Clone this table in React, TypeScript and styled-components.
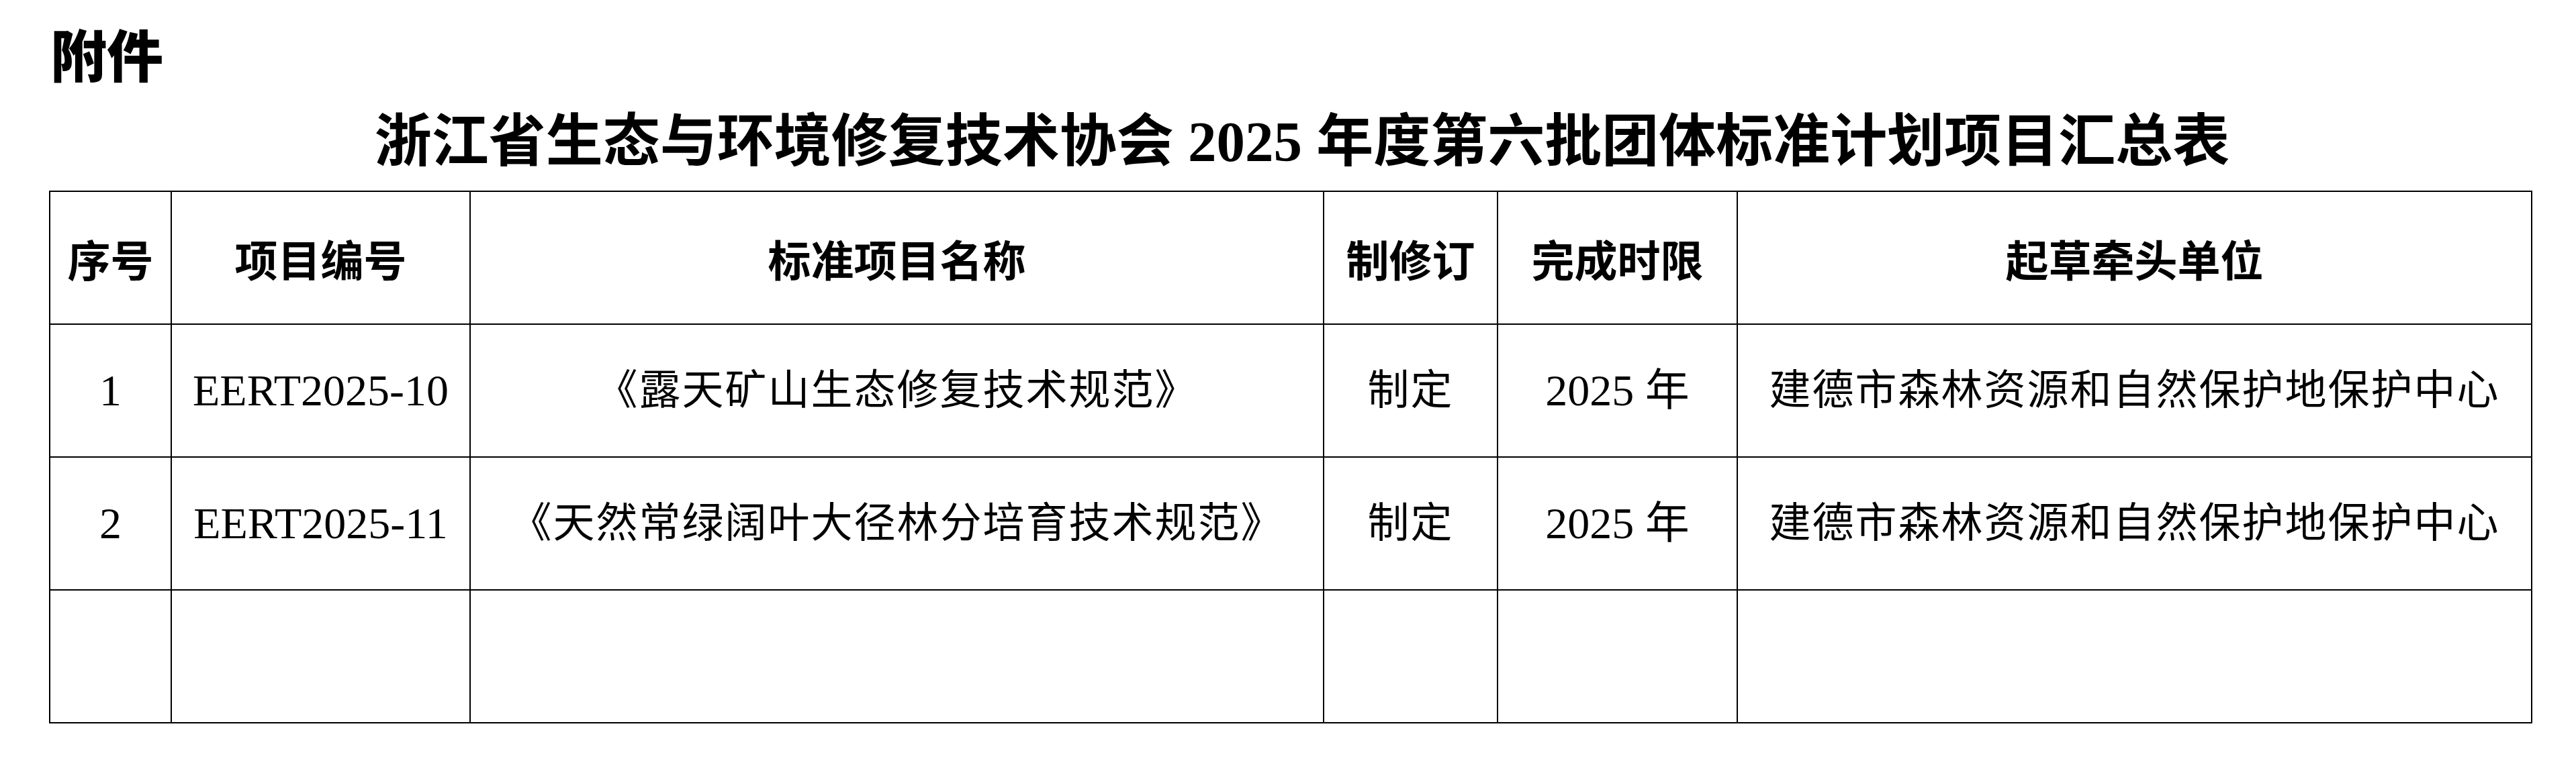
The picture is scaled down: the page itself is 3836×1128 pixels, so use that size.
import * as React from 'react';
import styled, { createGlobalStyle } from 'styled-components';

interface IRow {
  index: string;
  code: string;
  name: string;
  kind: string;
  deadline: string;
  unit: string;
}

const GlobalStyle = createGlobalStyle`
  html, body {
    margin: 0;
    padding: 0;
    background: #fff;
  }

  body {
    color: #000;
    font-family: "Liberation Serif", "Noto Sans CJK SC", serif;
  }
`;

const Page = styled.div`
  display: flex;
  flex-direction: column;
  width: 3836px;
  min-height: 1128px;
  padding-left: 73px;
  box-sizing: border-box;
`;

const Attachment = styled.div`
  padding: 37px 0 0 2px;
  font-family: "Noto Sans CJK SC", sans-serif;
  font-size: 84px;
  font-weight: 900;
  line-height: 84px;
`;

const Title = styled.h1`
  width: 3696px;
  margin: 46px 0 0;
  padding-left: 36px;
  box-sizing: border-box;
  font-family: "Liberation Serif", "Noto Sans CJK SC", serif;
  font-size: 85px;
  font-weight: 700;
  line-height: 88px;
  text-align: center;
  white-space: nowrap;
`;

const Table = styled.table`
  width: 3696px;
  margin-top: 29px;
  border-collapse: collapse;
  table-layout: fixed;
  border: 2px solid #000;
`;

const Row = styled.tr`
  height: 198px;
`;

const HeadCell = styled.th`
  border: 2px solid #000;
  padding: 0;
  font-family: "Noto Sans CJK SC", sans-serif;
  font-size: 64px;
  font-weight: 700;
  text-align: center;
  vertical-align: middle;
  line-height: 1.2;
`;

const Cell = styled.td<{ $latin?: boolean }>`
  border: 2px solid #000;
  padding: 0;
  font-family: "Liberation Serif", "Noto Sans CJK SC", serif;
  font-size: ${(p) => (p.$latin ? '66px' : '62px')};
  font-weight: 400;
  letter-spacing: ${(p) => (p.$latin ? '0' : '2px')};
  text-align: center;
  vertical-align: middle;
  line-height: 1.2;
  white-space: nowrap;
`;

const columns = [181, 445, 1271, 259, 357, 1183];
const headers = ['序号', '项目编号', '标准项目名称', '制修订', '完成时限', '起草牵头单位'];

const rows: IRow[] = [
  {
    index: '1',
    code: 'EERT2025-10',
    name: '《露天矿山生态修复技术规范》',
    kind: '制定',
    deadline: '2025 年',
    unit: '建德市森林资源和自然保护地保护中心',
  },
  {
    index: '2',
    code: 'EERT2025-11',
    name: '《天然常绿阔叶大径林分培育技术规范》',
    kind: '制定',
    deadline: '2025 年',
    unit: '建德市森林资源和自然保护地保护中心',
  },
];

const App = () => {
  return (
    <>
      <GlobalStyle />
      <Page>
        <Attachment>附件</Attachment>
        <Title>浙江省生态与环境修复技术协会 2025 年度第六批团体标准计划项目汇总表</Title>
        <Table>
          <colgroup>
            {columns.map((w, i) => <col key={`col-${i}`} style={{ width: `${w}px` }} />)}
          </colgroup>
          <thead>
            <Row>
              {headers.map((h) => <HeadCell key={h}>{h}</HeadCell>)}
            </Row>
          </thead>
          <tbody>
            {rows.map((r) => (
              <Row key={r.index}>
                <Cell $latin>{r.index}</Cell>
                <Cell $latin>{r.code}</Cell>
                <Cell>{r.name}</Cell>
                <Cell>{r.kind}</Cell>
                <Cell $latin>{r.deadline}</Cell>
                <Cell>{r.unit}</Cell>
              </Row>
            ))}
            <Row>
              {columns.map((_, i) => <Cell key={`empty-${i}`} />)}
            </Row>
          </tbody>
        </Table>
      </Page>
    </>
  );
};

export default App;
